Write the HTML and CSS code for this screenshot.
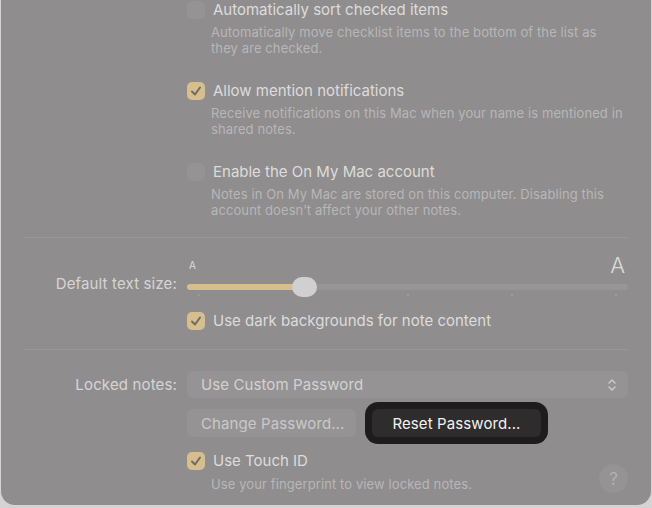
FILE: index.html
```html
<!DOCTYPE html>
<html>
<head>
<meta charset="utf-8">
<link rel="stylesheet" href="styles.css">
</head>
<body>
<div class="window">
  <div class="groups">
    <div class="group">
      <div class="check-row"><span class="cb"></span><span class="title">Automatically sort checked items</span></div>
      <div class="desc">Automatically move checklist items to the bottom of the list as<br>they are checked.</div>
    </div>
    <div class="group">
      <div class="check-row"><span class="cb on"><svg viewBox="0 0 18 18" width="18" height="18"><path d="M5 9.5 L8 12.5 L13 5.5" fill="none" stroke="#6f6b66" stroke-width="2" stroke-linecap="round" stroke-linejoin="round"/></svg></span><span class="title">Allow mention notifications</span></div>
      <div class="desc">Receive notifications on this Mac when your name is mentioned in<br>shared notes.</div>
    </div>
    <div class="group">
      <div class="check-row"><span class="cb"></span><span class="title">Enable the On My Mac account</span></div>
      <div class="desc">Notes in On My Mac are stored on this computer. Disabling this<br>account doesn’t affect your other notes.</div>
    </div>
  </div>

  <div class="sep sep1"></div>

  <div class="form text-size">
    <div class="flabel ts-label">Default text size:</div>
    <div class="fcontrol">
      <div class="slider">
        <div class="a-row"><span class="a-small">A</span><span class="a-big">A</span></div>
        <div class="track-wrap">
          <div class="track"><div class="fill"></div></div>
          <div class="thumb"></div>
        </div>
        <div class="ticks"><i></i><i></i><i></i><i></i><i></i></div>
      </div>
      <div class="check-row dark-row"><span class="cb on"><svg viewBox="0 0 18 18" width="18" height="18"><path d="M5 9.5 L8 12.5 L13 5.5" fill="none" stroke="#6f6b66" stroke-width="2" stroke-linecap="round" stroke-linejoin="round"/></svg></span><span class="title">Use dark backgrounds for note content</span></div>
    </div>
  </div>

  <div class="sep sep2"></div>

  <div class="form locked">
    <div class="flabel lk-label">Locked notes:</div>
    <div class="fcontrol">
      <div class="popup"><span>Use Custom Password</span>
        <svg width="10" height="14" viewBox="0 0 10 14"><path d="M2 5 L5 2 L8 5 M2 9 L5 12 L8 9" fill="none" stroke="#cfcece" stroke-width="1.4" stroke-linecap="round" stroke-linejoin="round"/></svg>
      </div>
      <div class="btn-row">
        <div class="btn">Change Password...</div>
        <div class="btn default">Reset Password...</div>
      </div>
      <div class="bottom-row">
        <div class="touch">
          <div class="check-row"><span class="cb on"><svg viewBox="0 0 18 18" width="18" height="18"><path d="M5 9.5 L8 12.5 L13 5.5" fill="none" stroke="#6f6b66" stroke-width="2" stroke-linecap="round" stroke-linejoin="round"/></svg></span><span class="title">Use Touch ID</span></div>
          <div class="desc touch-desc">Use your fingerprint to view locked notes.</div>
        </div>
        <div class="help">?</div>
      </div>
    </div>
  </div>
</div>
</body>
</html>
```

FILE: styles.css
```css
html, body {
  margin: 0;
  padding: 0;
  background: #d4d4d4;
}
body {
  font-family: Inter, "Open Sans", "Liberation Sans", sans-serif;
  -webkit-font-smoothing: antialiased;
}
.window {
  margin-left: 1px;
  width: 650px;
  height: 505px;
  background: #8f8d8e;
  border-radius: 0 0 14px 14px;
  overflow: hidden;
  color: #dddcdc;
  padding-top: 1px;
  box-sizing: border-box;
}
.groups {
  display: flex;
  flex-direction: column;
  gap: 26px;
  padding-left: 186px;
}
.group {
  display: flex;
  flex-direction: column;
}
.check-row {
  display: flex;
  align-items: center;
  gap: 8px;
  height: 18px;
}
.cb {
  width: 18px;
  height: 18px;
  border-radius: 5px;
  background: #959394;
  flex: none;
  display: block;
}
.cb.on {
  background: #d6bf8d;
}
.cb svg { display: block; }
.title {
  font-size: 15px;
  line-height: 18px;
  color: #dddcdc;
  white-space: nowrap;
}
.desc {
  margin-top: 5px;
  padding-left: 24px;
  font-size: 13px;
  line-height: 16px;
  letter-spacing: 0.1px;
  color: #b8b7b7;
}
.sep {
  height: 1px;
  background: #999798;
  margin-left: 23px;
  width: 604px;
}
.sep1 { margin-top: 19px; }
.sep2 { margin-top: 19px; }
.form {
  display: grid;
  grid-template-columns: 186px 441px;
}
.flabel {
  text-align: right;
  padding-right: 10px;
  font-size: 15px;
  line-height: 18px;
  letter-spacing: 0.15px;
  color: #d6d5d5;
}
.ts-label { padding-top: 37px; }
.slider {
  display: flex;
  flex-direction: column;
  padding-top: 15px;
}
.a-row {
  display: flex;
  justify-content: space-between;
  align-items: center;
  height: 24px;
  padding-left: 2px;
  padding-right: 3px;
}
.a-small {
  font-size: 10px;
  color: #dddcdc;
}
.a-big {
  font-size: 22px;
  font-weight: 300;
  color: #dddcdc;
}
.track-wrap {
  position: relative;
  height: 20px;
  display: flex;
  align-items: center;
}
.track {
  width: 100%;
  height: 6px;
  border-radius: 3px;
  background: #979596;
  overflow: hidden;
}
.fill {
  width: 116px;
  height: 100%;
  background: #d6bf8d;
}
.thumb {
  position: absolute;
  left: 105px;
  top: 0;
  width: 25px;
  height: 20px;
  border-radius: 10px;
  background: #d0d0d0;
}
.ticks {
  display: flex;
  justify-content: space-between;
  padding: 0 11px 0 11px;
  margin-top: -3px;
  height: 2px;
}
.ticks i {
  width: 2px;
  height: 2px;
  background: #a09e9f;
  border-radius: 1px;
}
.dark-row { margin-top: 16px; }
.locked { margin-top: 21px; }
.lk-label { padding-top: 5px; }
.popup {
  height: 27px;
  border-radius: 6px;
  background: #959394;
  display: flex;
  align-items: center;
  justify-content: space-between;
  padding: 0 11px 0 14px;
  font-size: 15px;
  letter-spacing: 0.1px;
  color: #d3d2d2;
}
.popup svg { display: block; }
.btn-row {
  display: flex;
  gap: 16px;
  margin-top: 11px;
}
.btn {
  width: 169px;
  height: 28px;
  border-radius: 6px;
  background: #959394;
  display: flex;
  align-items: center;
  padding-left: 14px;
  box-sizing: border-box;
  font-size: 15px;
  letter-spacing: 0.1px;
  color: #cac9c9;
}
.btn.default {
  background: #2e2c2d;
  color: #f2f2f2;
  justify-content: center;
  padding-left: 0;
  box-shadow: 0 0 0 7px #1e1c1d;
}
.bottom-row {
  display: flex;
  justify-content: space-between;
  align-items: flex-end;
  margin-top: 15px;
}
.touch-desc { margin-top: 6px; }
.help {
  width: 29px;
  height: 29px;
  border-radius: 50%;
  background: #959394;
  color: #b3b2b2;
  font-size: 17px;
  display: flex;
  align-items: center;
  justify-content: center;
  margin-bottom: -1px;
}
```
